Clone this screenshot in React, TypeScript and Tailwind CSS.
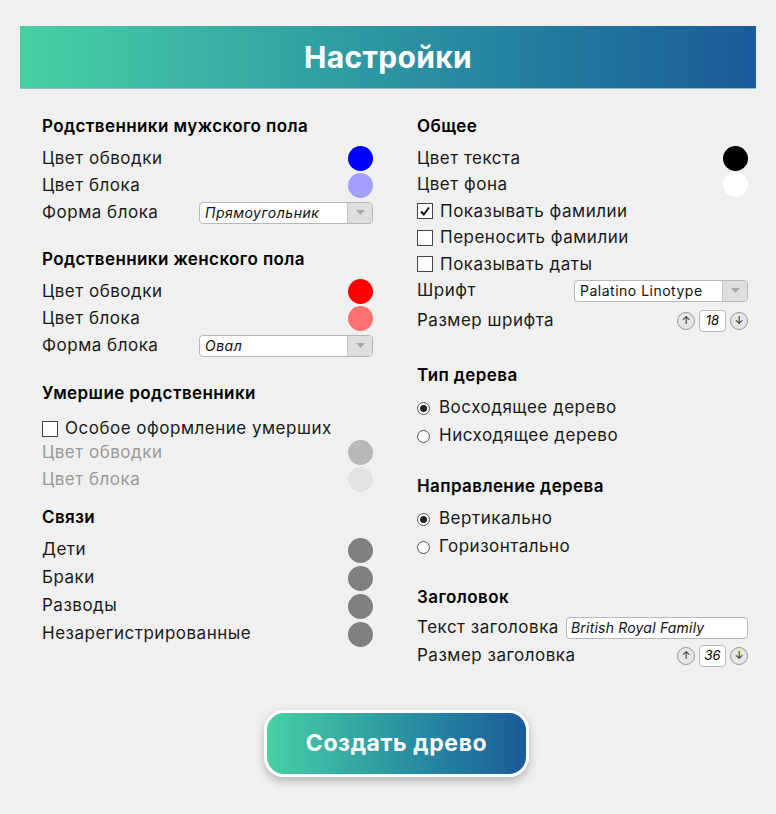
import { ReactNode } from 'react';

const font = { fontFamily: 'Inter, Lato, "Noto Sans", sans-serif' };

function Swatch({ color }: { color: string }) {
  return <div className={`h-[25px] w-[25px] rounded-full ${color}`} />;
}

function Row({ label, children, muted, h = 'h-[27px]' }: { label: string; children?: ReactNode; muted?: boolean; h?: string }) {
  return (
    <div className={`flex items-center justify-between ${h}`}>
      <span className={muted ? 'text-[#9a9a9a]' : 'text-[#1a1a1a]'}>{label}</span>
      {children}
    </div>
  );
}

function Heading({ children, className = '' }: { children: ReactNode; className?: string }) {
  return <div className={`flex h-[28px] items-center text-[17px] font-semibold tracking-[0.4px] text-black mb-[4px] ${className}`}>{children}</div>;
}

function Select({ value, italic, width }: { value: string; italic?: boolean; width: string }) {
  return (
    <div className={`flex h-[22px] ${width} overflow-hidden rounded-[4px] border border-[#b8b8b8] bg-white`}>
      <div className={`flex flex-1 items-center px-[5px] text-[14px] tracking-[0.5px] text-[#111] ${italic ? 'italic' : ''}`}>{value}</div>
      <div className="flex w-[25px] items-center justify-center border-l border-[#c8c8c8] bg-[#dedede]">
        <svg width="9" height="5" viewBox="0 0 9 5"><path d="M0 0h9L4.5 5z" fill="#a8a8a8" /></svg>
      </div>
    </div>
  );
}

function Checkbox({ label, checked }: { label: string; checked?: boolean }) {
  return (
    <div className="flex items-center gap-[7px]">
      <div className="flex h-[16px] w-[16px] items-center justify-center border border-[#444] bg-white">
        {checked && (
          <svg width="12" height="12" viewBox="0 0 12 12"><path d="M2 6.5l2.8 3L10 2.5" stroke="#111" strokeWidth="2" fill="none" /></svg>
        )}
      </div>
      <span className="text-[#1a1a1a]">{label}</span>
    </div>
  );
}

function Radio({ label, checked }: { label: string; checked?: boolean }) {
  return (
    <div className="flex h-[28px] items-center gap-[9px]">
      <div className="flex h-[13px] w-[13px] items-center justify-center rounded-full border border-[#555] bg-white">
        {checked && <div className="h-[7px] w-[7px] rounded-full bg-[#222]" />}
      </div>
      <span className="text-[#1a1a1a]">{label}</span>
    </div>
  );
}

function Stepper({ value }: { value: string }) {
  const btn = 'flex h-[18px] w-[18px] items-center justify-center rounded-full border border-[#9a9a9a] bg-[#e6e6e6] text-[11px] leading-none text-[#222]';
  return (
    <div className="flex items-center gap-[4px] tracking-normal">
      <div className={btn}>↑</div>
      <div className="flex h-[22px] w-[27px] items-center justify-center rounded-[4px] border border-[#b8b8b8] bg-white text-[13px] italic">{value}</div>
      <div className={btn}>↓</div>
    </div>
  );
}

export default function App() {
  return (
    <div className="min-h-screen bg-[#f0f0f0] px-5 pt-[26px] pb-8 text-[17px] tracking-[0.5px]" style={font}>
      {/* Header */}
      <div className="flex h-[63px] items-center justify-center border-b border-[#8fbfcf] bg-gradient-to-r from-[#48d0a3] to-[#1c5a99]">
        <h1 className="text-[30px] font-bold tracking-[0.3px] text-white">Настройки</h1>
      </div>

      <div className="grid grid-cols-2 gap-[44px] pl-[22px] pr-[8px] pt-[24px]">
        {/* Left column */}
        <div>
          <Heading>Родственники мужского пола</Heading>
          <Row label="Цвет обводки"><Swatch color="bg-[#0000ff]" /></Row>
          <Row label="Цвет блока"><Swatch color="bg-[#a0a0ff]" /></Row>
          <Row label="Форма блока"><Select value="Прямоугольник" italic width="w-[174px]" /></Row>

          <Heading className="mt-[20px]">Родственники женского пола</Heading>
          <Row label="Цвет обводки"><Swatch color="bg-[#ff0000]" /></Row>
          <Row label="Цвет блока"><Swatch color="bg-[#ff7070]" /></Row>
          <Row label="Форма блока"><Select value="Овал" italic width="w-[174px]" /></Row>

          <Heading className="mt-[21px]">Умершие родственники</Heading>
          <div className="mt-[10px] flex h-[21px] items-center">
            <Checkbox label="Особое оформление умерших" />
          </div>
          <Row label="Цвет обводки" muted><Swatch color="bg-[#b8b8b8]" /></Row>
          <Row label="Цвет блока" muted><Swatch color="bg-[#e2e2e2]" /></Row>

          <Heading className="mt-[11px]">Связи</Heading>
          <Row label="Дети" h="h-[28px]"><Swatch color="bg-[#808080]" /></Row>
          <Row label="Браки" h="h-[28px]"><Swatch color="bg-[#808080]" /></Row>
          <Row label="Разводы" h="h-[28px]"><Swatch color="bg-[#808080]" /></Row>
          <Row label="Незарегистрированные" h="h-[28px]"><Swatch color="bg-[#808080]" /></Row>
        </div>

        {/* Right column */}
        <div>
          <Heading>Общее</Heading>
          <Row label="Цвет текста" h="h-[26.5px]"><Swatch color="bg-black" /></Row>
          <Row label="Цвет фона" h="h-[26.5px]"><Swatch color="bg-white" /></Row>
          <div className="flex h-[26.5px] items-center"><Checkbox label="Показывать фамилии" checked /></div>
          <div className="flex h-[26.5px] items-center"><Checkbox label="Переносить фамилии" /></div>
          <div className="flex h-[26.5px] items-center"><Checkbox label="Показывать даты" /></div>
          <Row label="Шрифт" h="h-[26.5px]"><Select value="Palatino Linotype" width="w-[174px]" /></Row>
          <Row label="Размер шрифта" h="mt-[3px] h-[27px]"><Stepper value="18" /></Row>

          <Heading className="mt-[28px]">Тип дерева</Heading>
          <Radio label="Восходящее дерево" checked />
          <Radio label="Нисходящее дерево" />

          <Heading className="mt-[23px]">Направление дерева</Heading>
          <Radio label="Вертикально" checked />
          <Radio label="Горизонтально" />

          <Heading className="mt-[23px] !mb-[2px]">Заголовок</Heading>
          <Row label="Текст заголовка">
            <div className="flex h-[22px] w-[182px] items-center rounded-[4px] border border-[#b8b8b8] bg-white px-[4px] text-[14px] tracking-[0.2px] italic text-[#111]">
              British Royal Family
            </div>
          </Row>
          <Row label="Размер заголовка" h="h-[29px]"><Stepper value="36" /></Row>
        </div>
      </div>

      {/* Submit */}
      <div className="flex justify-center pl-[17px] pt-[40px]">
        <button className="flex h-[67px] w-[265px] items-center justify-center rounded-[20px] border-[3px] border-white bg-gradient-to-r from-[#48d0a3] to-[#1c5a99] text-[23px] font-bold tracking-[0.6px] text-white shadow-[0_4px_10px_rgba(0,0,0,0.25)]">
          Создать древо
        </button>
      </div>
    </div>
  );
}
